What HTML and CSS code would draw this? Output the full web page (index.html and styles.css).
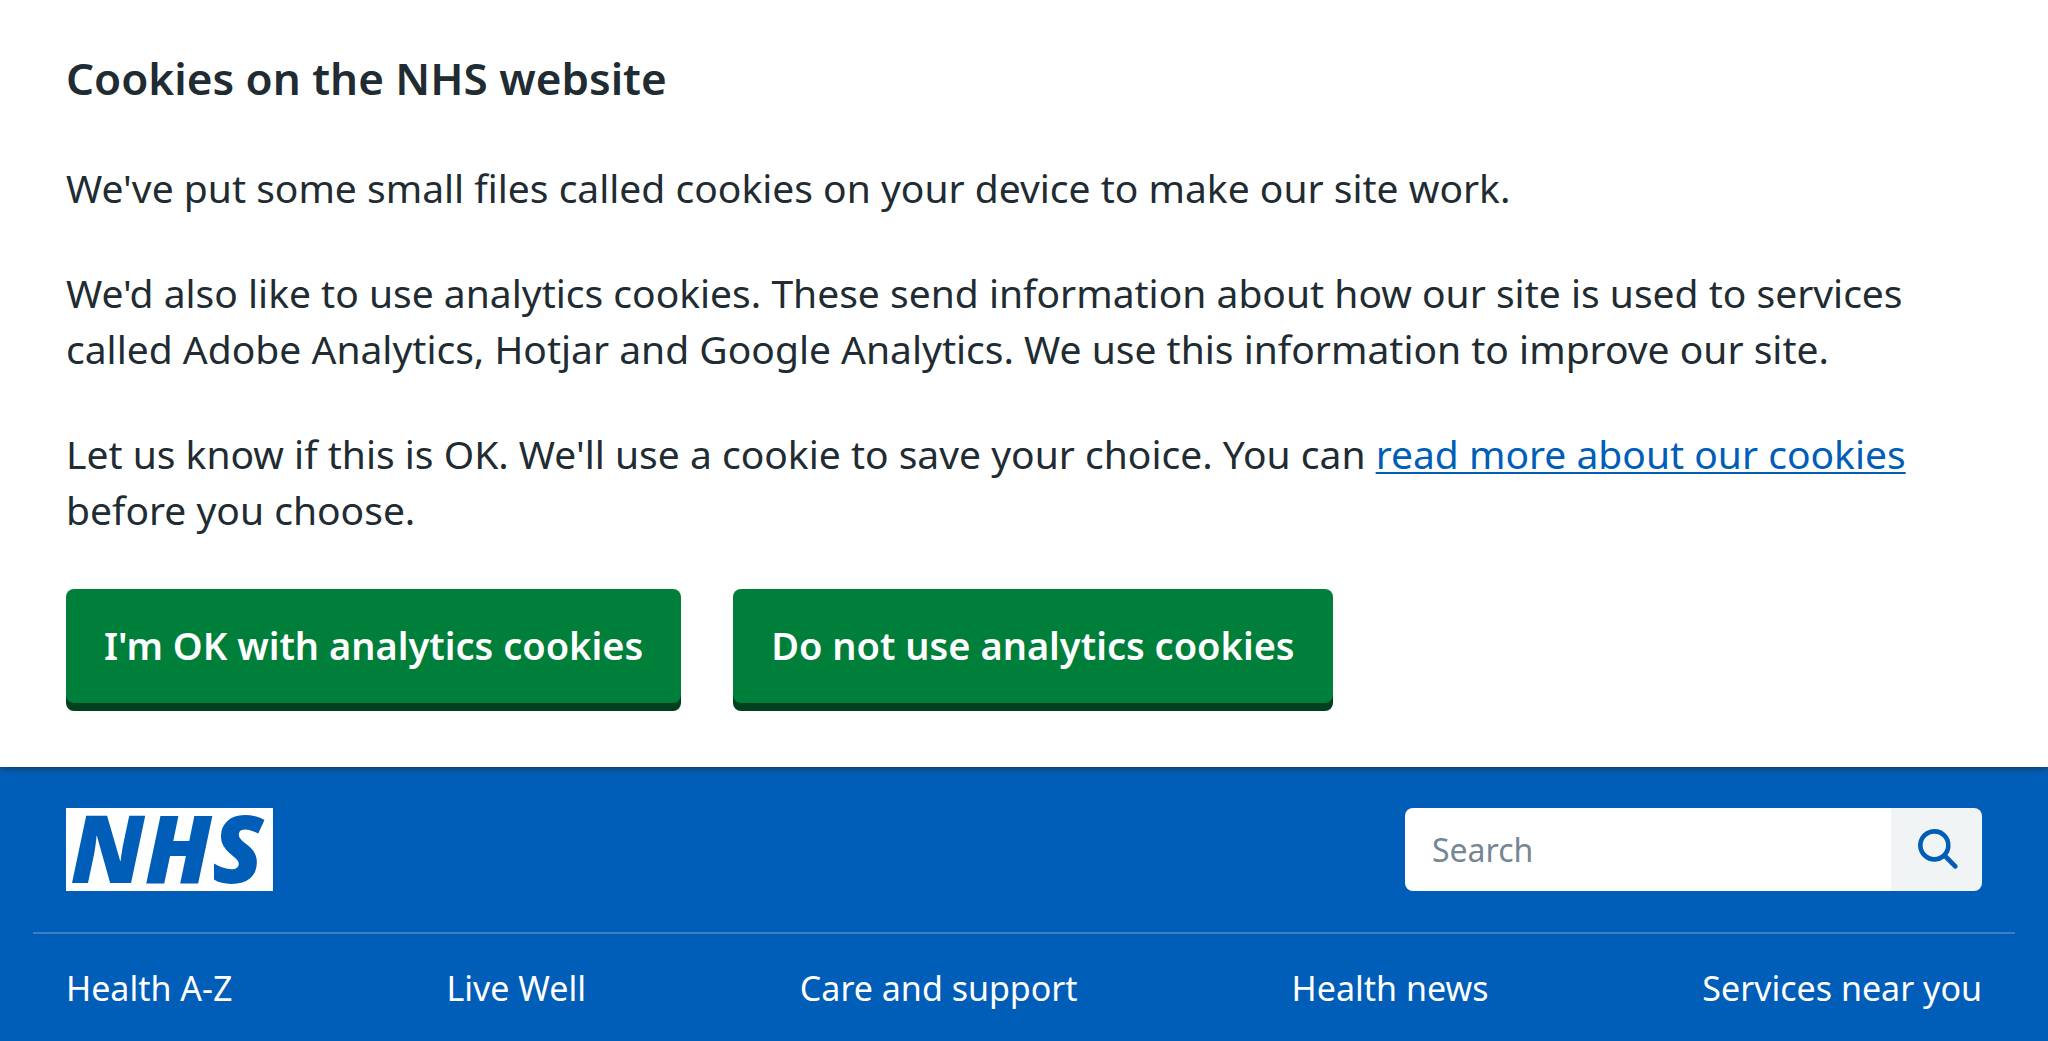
FILE: index.html
```html
<!DOCTYPE html>
<html lang="en">
<head>
<meta charset="utf-8">
<meta name="viewport" content="width=device-width, initial-scale=1">
<title>The NHS website</title>
<link rel="stylesheet" href="styles.css">
</head>
<body>
<section class="cookie-banner" aria-labelledby="cookie-title">
  <h2 class="cookie-title" id="cookie-title">Cookies on the NHS website</h2>
  <p class="cookie-text">We've put some small files called cookies on your device to make our site work.</p>
  <p class="cookie-text">We'd also like to use analytics cookies. These send information about how our site is used to services called Adobe Analytics, Hotjar and Google Analytics. We use this information to improve our site.</p>
  <p class="cookie-text">Let us know if this is OK. We'll use a cookie to save your choice. You can <a class="cookie-link" href="#cookies">read more about our cookies</a> before you choose.</p>
  <div class="cookie-actions">
    <button class="button" type="button">I'm OK with analytics cookies</button>
    <button class="button" type="button">Do not use analytics cookies</button>
  </div>
</section>
<header class="header">
  <div class="header-top">
    <a class="logo" href="#home" aria-label="NHS homepage">
      <svg class="logo-image" viewBox="0 0 207 83" aria-hidden="true">
        <rect width="207" height="83" fill="#fff"/>
        <text class="logo-text" x="101" y="75" text-anchor="middle">NHS</text>
      </svg>
    </a>
    <form class="search" role="search">
      <input class="search-input" type="search" aria-label="Search the NHS website" placeholder="Search">
      <button class="search-button" type="submit" aria-label="Search">
        <svg class="search-icon" viewBox="0 0 24 24" aria-hidden="true">
          <path d="M19.71 18.29l-4.11-4.1a7 7 0 1 0-1.41 1.41l4.1 4.11a1 1 0 0 0 1.42 0 1 1 0 0 0 0-1.42zM5 10a5 5 0 1 1 5 5 5 5 0 0 1-5-5z"/>
        </svg>
      </button>
    </form>
  </div>
  <nav class="nav" aria-label="Primary">
    <ul class="nav-list">
      <li><a class="nav-link" href="#health">Health A-Z</a></li>
      <li><a class="nav-link" href="#live-well">Live Well</a></li>
      <li><a class="nav-link" href="#care">Care and support</a></li>
      <li><a class="nav-link" href="#news">Health news</a></li>
      <li><a class="nav-link" href="#services">Services near you</a></li>
    </ul>
  </nav>
</header>
</body>
</html>
```
FILE: styles.css
```css
* {
  box-sizing: border-box;
}

body {
  margin: 0;
  background: #005eb8;
  color: #212b32;
  font-family: "Noto Sans", "Open Sans", sans-serif;
}

.cookie-banner {
  position: relative;
  padding: 50px 66px 56px;
  background: #fff;
  box-shadow: 0 0 8px #212b32;
}

.cookie-title {
  margin: 0 0 54px;
  font-size: 44px;
  line-height: 56px;
  font-weight: 600;
}

.cookie-text {
  margin: 0 0 49px;
  font-size: 39px;
  line-height: 56px;
}

.cookie-link {
  color: #005eb8;
  text-decoration-thickness: 2px;
  text-underline-offset: 3px;
  text-decoration-skip-ink: none;
}

.cookie-actions {
  display: flex;
  flex-wrap: wrap;
  gap: 52px;
  padding-top: 2px;
}

.button {
  margin: 0 0 8px;
  padding: 28px 38px 30px;
  border: 0;
  border-radius: 8px;
  background: #007f3b;
  box-shadow: 0 8px 0 #00401e;
  color: #fff;
  font: 600 38px/56px "Noto Sans", "Open Sans", sans-serif;
  cursor: pointer;
}

.header-top {
  display: flex;
  align-items: flex-start;
  justify-content: space-between;
  padding: 41px 66px;
}

.logo,
.logo-image {
  display: block;
  width: 207px;
  height: 83px;
}

.logo-image {
  overflow: visible;
}

.logo-text {
  fill: #005eb8;
  font: italic 800 94px "Open Sans", sans-serif;
}

.search {
  display: flex;
  width: 577px;
  height: 83px;
  overflow: hidden;
  border-radius: 8px;
}

.search-input {
  flex: 1;
  min-width: 0;
  padding: 0 27px;
  border: 0;
  border-radius: 0;
  background: #fff;
  appearance: none;
  color: #212b32;
  font: 32px/48px "Noto Sans", "Open Sans", sans-serif;
}

.search-input::placeholder {
  color: #768692;
  opacity: 1;
}

.search-button {
  display: flex;
  align-items: center;
  justify-content: center;
  width: 91px;
  padding: 0 0 0 5px;
  border: 0;
  background: #f0f4f5;
  cursor: pointer;
}

.search-icon {
  width: 56px;
  height: 56px;
  fill: #005eb8;
}

.nav {
  margin: 0 33px;
  padding: 30px 33px;
  border-top: 2px solid #3f7dc6;
}

.nav-list {
  display: flex;
  flex-wrap: wrap;
  justify-content: space-between;
  margin: 0;
  padding: 0;
  list-style: none;
}

.nav-link {
  color: #fff;
  font-size: 34px;
  line-height: 48px;
  text-decoration: none;
}
```
